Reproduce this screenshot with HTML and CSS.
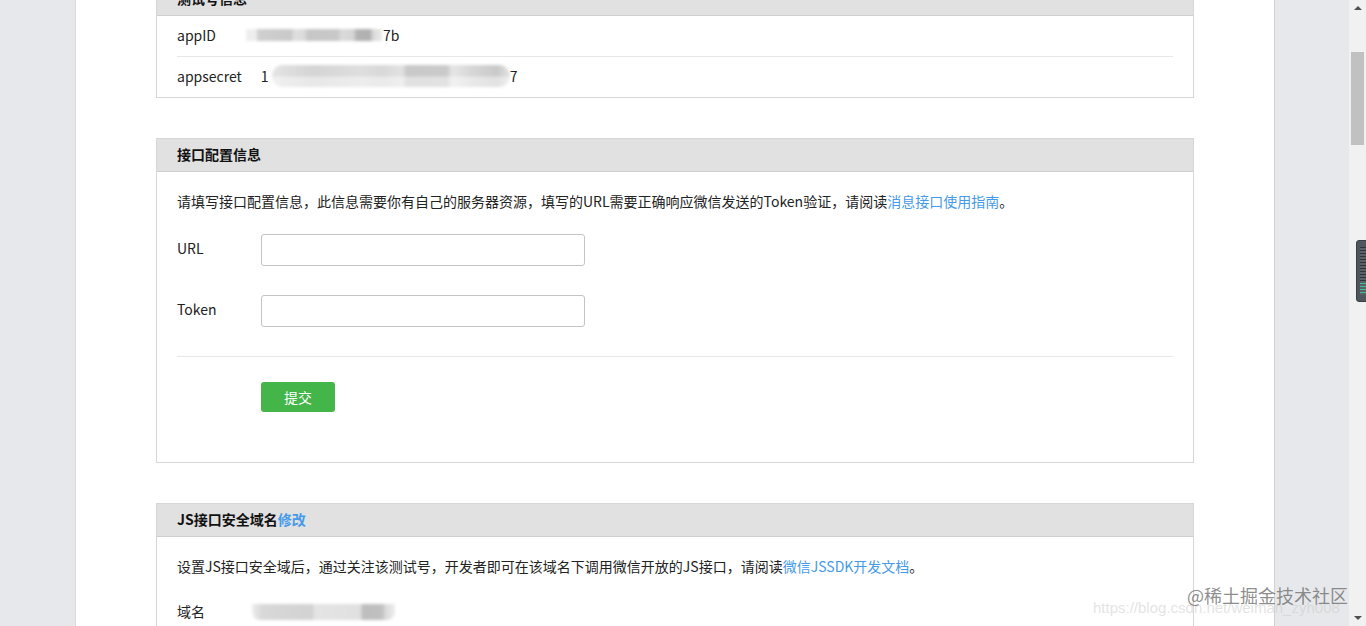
FILE: index.html
```html
<!DOCTYPE html>
<html lang="zh-CN">
<head>
<meta charset="utf-8">
<title>测试号管理</title>
<link rel="stylesheet" href="styles.css">
</head>
<body>
<div class="page">
  <div class="gutter gutter-left"></div>
  <main class="main">
    <section class="panel panel-first">
      <div class="panel-hd">测试号信息</div>
      <div class="info-list">
        <div class="info-row">
          <span class="info-label">appID</span>
          <span class="info-value id-value"><span class="blur blur-id"></span><span class="tail">7b</span></span>
        </div>
        <div class="info-row">
          <span class="info-label">appsecret</span>
          <span class="info-value secret-value"><span class="head">1</span><span class="blur blur-secret"></span><span class="tail">7</span></span>
        </div>
      </div>
    </section>

    <section class="panel">
      <div class="panel-hd">接口配置信息</div>
      <div class="panel-bd">
        <p class="desc">请填写接口配置信息，此信息需要你有自己的服务器资源，填写的URL需要正确响应微信发送的Token验证，请阅读<a class="link" href="#">消息接口使用指南</a>。</p>
        <div class="form-row">
          <label class="form-label">URL</label>
          <input class="form-input" type="text">
        </div>
        <div class="form-row form-row-second">
          <label class="form-label">Token</label>
          <input class="form-input" type="text">
        </div>
        <div class="form-actions">
          <button class="btn-submit" type="button">提交</button>
        </div>
      </div>
    </section>

    <section class="panel">
      <div class="panel-hd">JS接口安全域名<a class="link" href="#">修改</a></div>
      <div class="panel-bd">
        <p class="desc">设置JS接口安全域后，通过关注该测试号，开发者即可在该域名下调用微信开放的JS接口，请阅读<a class="link" href="#">微信JSSDK开发文档</a>。</p>
        <div class="domain-row">
          <span class="domain-label">域名</span>
          <span class="blur blur-domain"></span>
        </div>
      </div>
    </section>
  </main>
  <div class="gutter gutter-right"></div>
  <div class="scrollbar">
    <div class="sb-arrow sb-up"></div>
    <div class="sb-thumb"></div>
    <div class="sb-fill"></div>
    <div class="sb-arrow sb-down"></div>
  </div>
</div>
<div class="side-widget"></div>
<div class="wm-url">https://blog.csdn.net/weiman_zyh008</div>
<div class="wm-juejin">@稀土掘金技术社区</div>
</body>
</html>
```

FILE: styles.css
```css
html, body {
  margin: 0;
  padding: 0;
  height: 626px;
  overflow: hidden;
}
body {
  font-family: "Microsoft YaHei", "Noto Sans CJK SC", sans-serif;
  font-size: 14px;
  color: #222;
  background: #e7e8eb;
}
.page {
  display: flex;
  height: 626px;
}
.gutter {
  background: #e7e8eb;
}
.gutter-left {
  width: 75px;
  border-right: 1px solid #dcdcdc;
}
.gutter-right {
  width: 74px;
}
.main {
  width: 1038px;
  padding: 0 80px;
  background: #fff;
  border-right: 1px solid #d2d2d2;
  overflow: hidden;
}
.panel {
  border: 1px solid #d6d6d6;
  background: #fff;
  margin-bottom: 40px;
}
.panel-first {
  margin-top: -18px;
}
.panel-hd {
  height: 32px;
  line-height: 31px;
  padding-left: 20px;
  background: #e1e1e1;
  border-bottom: 1px solid #cfcfcf;
  font-weight: bold;
  font-size: 14px;
  color: #111;
}
.link {
  color: #459ae9;
  text-decoration: none;
  font-weight: normal;
}
.panel-hd .link {
  font-weight: bold;
}
.info-list {
  padding: 0 20px;
}
.info-row {
  display: flex;
  align-items: center;
  height: 40px;
  border-bottom: 1px solid #e7e7e7;
}
.info-row:last-child {
  border-bottom: none;
  height: 40px;
}
.info-label {
  color: #222;
  line-height: 18px;
  margin-top: -2px;
}
.info-value {
  display: flex;
  align-items: center;
  margin-top: -2px;
}
.id-value {
  margin-left: 30px;
}
.secret-value {
  margin-left: 19px;
}
.blur {
  display: inline-block;
  filter: blur(1.5px);
}
.blur-id {
  width: 136px;
  height: 12px;
  margin-right: 1px;
  background: linear-gradient(90deg, #eee 0, #eee 10px, #cfcfcf 12px, #c9c9c9 45px, #dedede 48px, #dcdcdc 58px, #c6c6c6 62px, #c8c8c8 92px, #dadada 95px, #d4d4d4 108px, #b4b4b4 110px, #b0b0b0 124px, #d9d9d9 127px, #eaeaea 136px);
}
.blur-secret {
  width: 238px;
  height: 22px;
  margin-left: 3px;
  border-radius: 11px;
  background:
    linear-gradient(180deg, rgba(255,255,255,0) 0, rgba(255,255,255,0) 50%, rgba(255,255,255,0.45) 55%, rgba(255,255,255,0.45) 100%),
    linear-gradient(90deg, #e4e4e4 0, #dcdcdc 20px, #d4d4d4 40px, #dedede 90px, #d8d8d8 110px, #e2e2e2 130px, #c8c8c8 135px, #cacaca 175px, #e6e6e6 180px, #d6d6d6 200px, #c9c9c9 225px, #e2e2e2 238px);
}
.head, .tail {
  color: #222;
}
.blur-domain {
  width: 143px;
  height: 16px;
  margin-left: 47px;
  border-radius: 0 0 8px 8px;
  background: linear-gradient(90deg, #eee 0, #d8d8d8 10px, #d2d2d2 60px, #e4e4e4 63px, #e0e0e0 108px, #bdbdbd 111px, #c0c0c0 130px, #dcdcdc 134px, #ececec 143px);
}
.panel-bd {
  padding: 19px 20px 50px;
}
.desc {
  margin: 0;
  line-height: 20px;
  color: #222;
}
.form-row {
  display: flex;
  align-items: center;
  margin-top: 23px;
}
.form-row-second {
  margin-top: 29px;
}
.form-label {
  width: 84px;
  color: #222;
  margin-top: -4px;
}
.form-input {
  width: 322px;
  height: 30px;
  box-sizing: content-box;
  padding: 0;
  margin: 0;
  border: 1px solid #c4c4c4;
  border-radius: 3px;
  background: #fff;
  outline: none;
}
.form-actions {
  margin-top: 29px;
  border-top: 1px solid #e7e7e7;
  padding-top: 25px;
  padding-left: 84px;
}
.btn-submit {
  width: 74px;
  height: 30px;
  border: none;
  border-radius: 3px;
  background: #44b549;
  color: #fff;
  font-family: "Microsoft YaHei", "Noto Sans CJK SC", sans-serif;
  font-size: 14px;
  padding: 0;
  cursor: pointer;
}
.domain-row {
  display: flex;
  align-items: center;
  margin-top: 26px;
  height: 20px;
}
.domain-label {
  margin-top: -2px;
}
.scrollbar {
  width: 17px;
  background: #f1f1f1;
  display: flex;
  flex-direction: column;
  align-items: center;
}
.sb-arrow {
  width: 0;
  height: 0;
  border-left: 4px solid transparent;
  border-right: 4px solid transparent;
}
.sb-up {
  margin-top: 6px;
  border-bottom: 4px solid #505050;
}
.sb-thumb {
  width: 13px;
  height: 93px;
  margin-top: 42px;
  background: #c1c1c1;
}
.sb-fill {
  flex: 1;
}
.sb-down {
  margin-bottom: 6px;
  border-top: 4px solid #505050;
}
.side-widget {
  position: absolute;
  left: 1356px;
  top: 240px;
  width: 14px;
  height: 60px;
  border-radius: 3px;
  background:
    repeating-linear-gradient(180deg, #2f343a 0, #2f343a 1px, #5a6068 1px, #5a6068 3px) 3px 6px / 6px 36px no-repeat,
    repeating-linear-gradient(180deg, #3fbf8f 0, #3fbf8f 1px, #5a6068 1px, #5a6068 3px) 3px 42px / 6px 12px no-repeat,
    #50565e;
  border: 1px solid #3a3f45;
}
.wm-url {
  position: absolute;
  left: 1093px;
  top: 599px;
  font-family: "Liberation Sans", Arial, sans-serif;
  font-size: 15px;
  color: rgba(200, 200, 200, 0.5);
  white-space: nowrap;
}
.wm-juejin {
  position: absolute;
  left: 1187px;
  top: 583px;
  font-family: "Noto Sans CJK SC", sans-serif;
  font-size: 18px;
  line-height: 24px;
  color: rgba(120, 120, 120, 0.85);
  white-space: nowrap;
}
```
